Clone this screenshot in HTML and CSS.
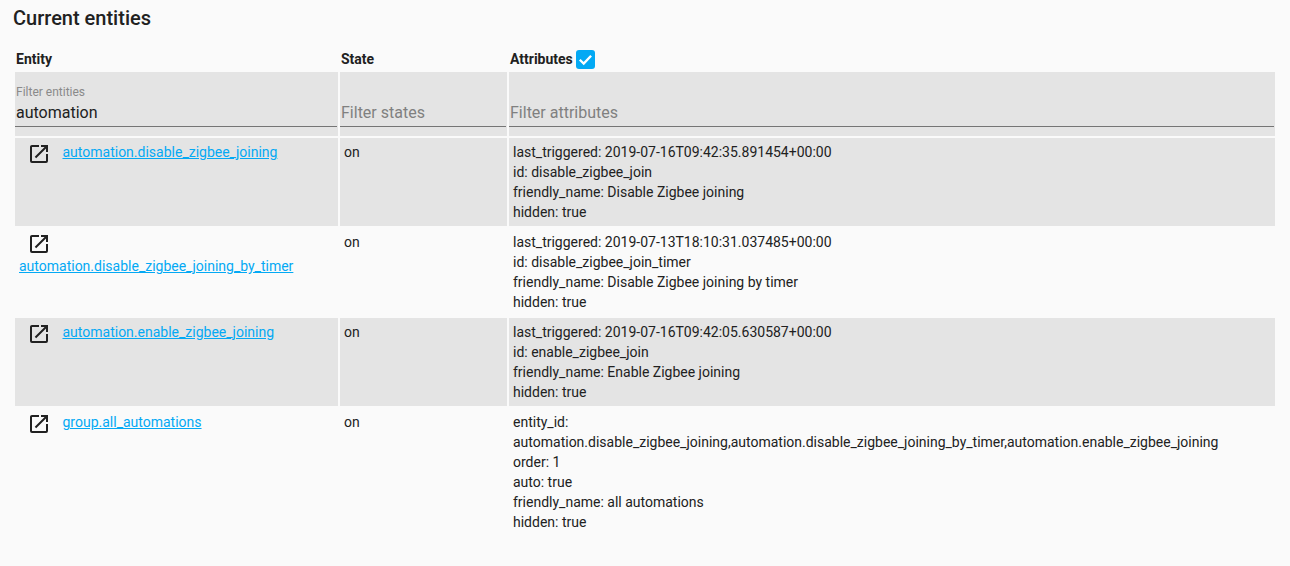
FILE: index.html
```html
<!DOCTYPE html>
<html lang="en">
<head>
<meta charset="utf-8">
<title>Current entities</title>
<link rel="stylesheet" href="styles.css">
</head>
<body>
<h1 class="title">Current entities</h1>
<table class="entities">
  <colgroup><col class="col-entity"><col class="col-state"><col class="col-attrs"></colgroup>
  <thead>
    <tr class="head-row">
      <th>Entity</th>
      <th>State</th>
      <th><span class="attr-head">Attributes <span class="checkbox"><svg viewBox="0 0 18 18" width="19" height="19"><path d="M3.6 9.2l3.7 3.6 7-7.4" fill="none" stroke="#fff" stroke-width="2.2"/></svg></span></span></th>
    </tr>
    <tr class="filter-row">
      <th><div class="field"><div class="float-label">Filter entities</div><div class="value">automation</div></div></th>
      <th><div class="field"><div class="value placeholder">Filter states</div></div></th>
      <th><div class="field"><div class="value placeholder">Filter attributes</div></div></th>
    </tr>
  </thead>
  <tbody>
    <tr>
      <td><svg class="open" viewBox="0 0 24 24" width="24" height="24"><path d="M14,3V5H17.59L7.76,14.83L9.17,16.24L19,6.41V10H21V3M19,19H5V5H12V3H5C3.89,3 3,3.9 3,5V19A2,2 0 0,0 5,21H19A2,2 0 0,0 21,19V12H19V19Z"/></svg><a href="#">automation.disable_zigbee_joining</a></td>
      <td>on</td>
      <td>last_triggered: 2019-07-16T09:42:35.891454+00:00<br>id: disable_zigbee_join<br>friendly_name: Disable Zigbee joining<br>hidden: true</td>
    </tr>
    <tr>
      <td><svg class="open" viewBox="0 0 24 24" width="24" height="24"><path d="M14,3V5H17.59L7.76,14.83L9.17,16.24L19,6.41V10H21V3M19,19H5V5H12V3H5C3.89,3 3,3.9 3,5V19A2,2 0 0,0 5,21H19A2,2 0 0,0 21,19V12H19V19Z"/></svg><a href="#">automation.disable_zigbee_joining_by_timer</a></td>
      <td>on</td>
      <td>last_triggered: 2019-07-13T18:10:31.037485+00:00<br>id: disable_zigbee_join_timer<br>friendly_name: Disable Zigbee joining by timer<br>hidden: true</td>
    </tr>
    <tr>
      <td><svg class="open" viewBox="0 0 24 24" width="24" height="24"><path d="M14,3V5H17.59L7.76,14.83L9.17,16.24L19,6.41V10H21V3M19,19H5V5H12V3H5C3.89,3 3,3.9 3,5V19A2,2 0 0,0 5,21H19A2,2 0 0,0 21,19V12H19V19Z"/></svg><a href="#">automation.enable_zigbee_joining</a></td>
      <td>on</td>
      <td>last_triggered: 2019-07-16T09:42:05.630587+00:00<br>id: enable_zigbee_join<br>friendly_name: Enable Zigbee joining<br>hidden: true</td>
    </tr>
    <tr>
      <td><svg class="open" viewBox="0 0 24 24" width="24" height="24"><path d="M14,3V5H17.59L7.76,14.83L9.17,16.24L19,6.41V10H21V3M19,19H5V5H12V3H5C3.89,3 3,3.9 3,5V19A2,2 0 0,0 5,21H19A2,2 0 0,0 21,19V12H19V19Z"/></svg><a href="#">group.all_automations</a></td>
      <td>on</td>
      <td>entity_id:<br>automation.disable_zigbee_joining,automation.disable_zigbee_joining_by_timer,automation.enable_zigbee_joining<br>order: 1<br>auto: true<br>friendly_name: all automations<br>hidden: true</td>
    </tr>
  </tbody>
</table>
</body>
</html>
```
FILE: styles.css
```css
html, body {
  margin: 0;
  height: 566px;
  overflow: hidden;
  background: #fafafa;
  color: #212121;
  font-family: Roboto, "Liberation Sans", sans-serif;
  font-size: 14px;
  line-height: 20px;
}
.title {
  margin: 0;
  padding: 4px 13px 0;
  font-size: 20px;
  font-weight: 500;
  line-height: 28px;
}
.entities {
  margin: 14px 0 0 13px;
  width: 1264px;
  table-layout: fixed;
  border-collapse: separate;
  border-spacing: 2px;
}
.col-entity { width: 323px; }
.col-state { width: 167px; }
.col-attrs { width: 766px; }
th {
  text-align: left;
  font-weight: 700;
  padding: 0;
}
.head-row th {
  height: 22px;
  padding: 0 1px;
  vertical-align: middle;
}
.attr-head {
  display: inline-flex;
  align-items: center;
  gap: 3px;
}
.checkbox {
  display: inline-block;
  width: 19px;
  height: 19px;
  border-radius: 3px;
  background: #03a9f4;
}
.checkbox svg { display: block; }
.filter-row th {
  height: 64px;
  background: #e4e4e4;
  font-weight: 400;
  vertical-align: top;
}
.field {
  height: 54px;
  margin-right: 1px;
  padding: 0 1px;
  border-bottom: 1px solid #757575;
  display: flex;
  flex-direction: column;
  justify-content: flex-end;
}
.float-label {
  font-size: 12px;
  line-height: 14px;
  color: #8a8a8a;
  margin-bottom: 2px;
}
.value {
  font-size: 16px;
  line-height: 24px;
  color: #212121;
  padding-bottom: 1px;
}
.placeholder { color: #808080; }
td {
  padding: 4px;
  vertical-align: top;
}
tbody tr:nth-child(odd) td { background: #e4e4e4; }
.open {
  margin: 0 11.5px 0 8px;
  vertical-align: -9px;
  fill: #212121;
}
a { color: #03a9f4; }
```
